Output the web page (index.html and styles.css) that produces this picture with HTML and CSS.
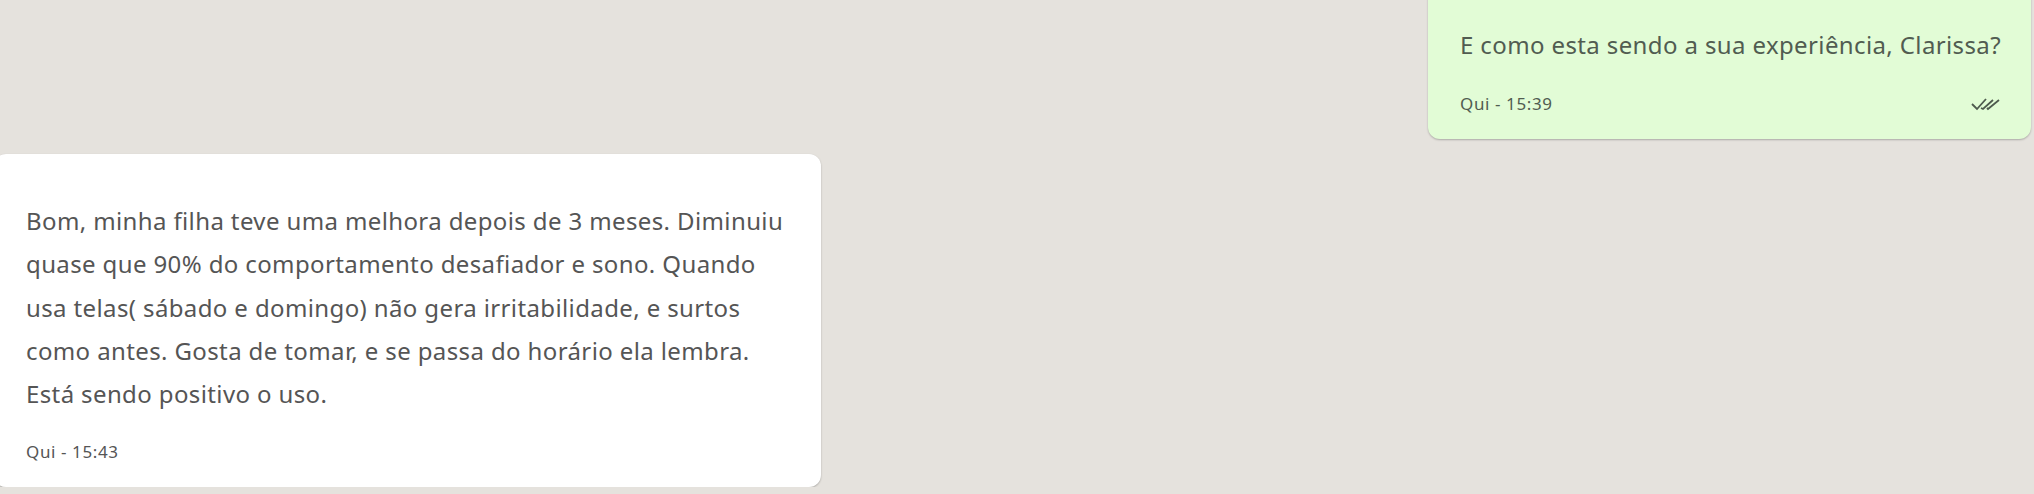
FILE: index.html
```html
<!DOCTYPE html>
<html lang="pt-BR">
<head>
  <meta charset="UTF-8" />
  <meta name="viewport" content="width=device-width, initial-scale=1" />
  <title>Conversa</title>
  <link rel="stylesheet" href="styles.css">
</head>
<body>

<div class="chat">
  <div class="msg msg-out">
    <p class="msg-text">E como esta sendo a sua experiência, Clarissa?</p>
    <div class="msg-meta">
      <span class="msg-time">Qui - 15:39</span>
      <svg class="msg-check" width="30" height="14" viewBox="0 0 30 14">
        <path d="M1 7 L6 12 L15 2" />
        <path d="M10 11 L12 12 L22 3" />
        <path d="M16 11 L17 12 L28 3" />
      </svg>
    </div>
  </div>

  <div class="msg msg-in">
    <p class="msg-text">Bom, minha filha teve uma melhora depois de 3 meses. Diminuiu quase que 90% do comportamento desafiador e sono. Quando usa telas( sábado e domingo) não gera irritabilidade, e surtos como antes. Gosta de tomar, e se passa do horário ela lembra. Está sendo positivo o uso.</p>
    <div class="msg-meta">
      <span class="msg-time">Qui - 15:43</span>
    </div>
  </div>
</div>

</body>
</html>
```

FILE: styles.css
```css
body {
  margin: 0;
  background-color: #e5e2dd;
  font-family: "Noto Sans", Arial, sans-serif;
  overflow: hidden;
}
.chat {
  display: flex;
  flex-direction: column;
  gap: 15px;
}
.msg {
  border-radius: 12px;
  box-shadow: 0 1px 2px rgba(0, 0, 0, 0.25);
}
.msg-text {
  margin: 0;
  font-size: 24px;
  line-height: 43.2px;
  letter-spacing: 0.38px;
}
.msg-meta {
  display: flex;
  justify-content: space-between;
  align-items: center;
  margin-top: 28px;
}
.msg-time {
  font-size: 17px;
  line-height: 20px;
  letter-spacing: 0.6px;
}
/* mensagem enviada */
.msg-out {
  align-self: flex-end;
  margin: -20px 3px 0 0;
  padding: 43px 30px 25px 32px;
  background-color: #e2fcd6;
  color: #515c51;
}
.msg-check {
  fill: none;
  stroke: #4e5a4e;
  stroke-width: 1.8;
}
/* mensagem recebida */
.msg-in {
  align-self: flex-start;
  width: 763px;
  margin-left: -6px;
  padding: 45px 32px 25px 32px;
  background-color: #fff;
  color: #555;
}
.msg-in .msg-meta {
  margin-top: 27px;
}
```
